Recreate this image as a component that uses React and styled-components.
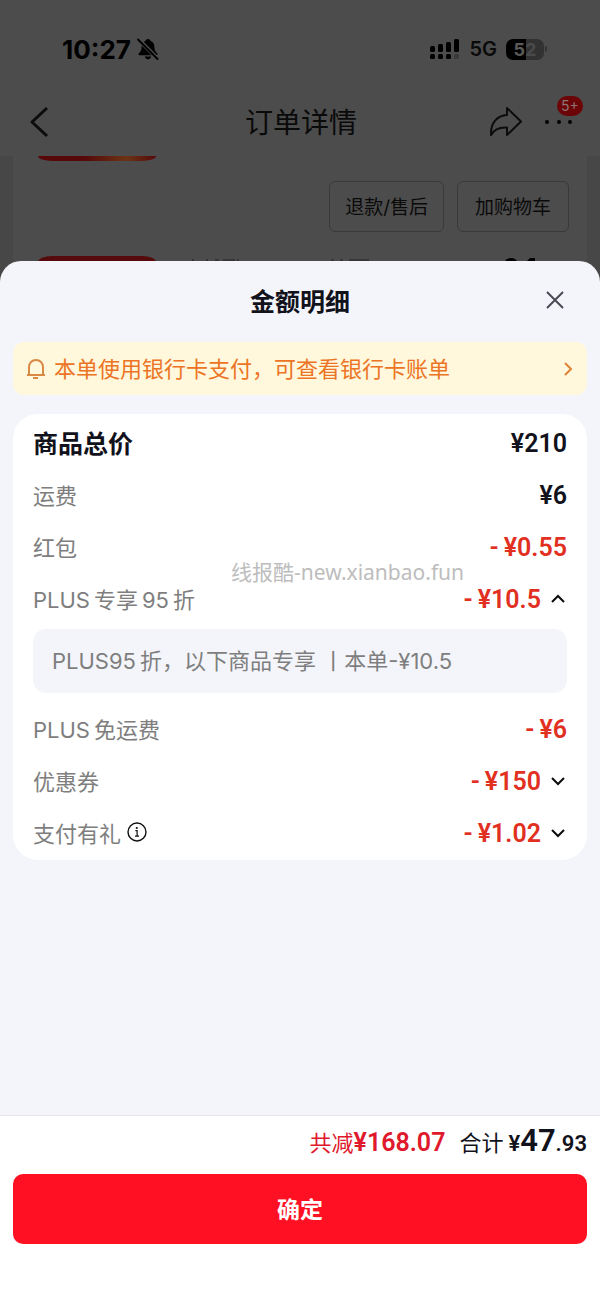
import React from "react";
import styled, { createGlobalStyle } from "styled-components";

const GlobalStyle = createGlobalStyle`
  * {
    box-sizing: border-box;
  }
  body {
    margin: 0;
    background: #4c4c4c;
    font-family: Inter, "Noto Sans CJK SC", sans-serif;
    color: #12121c;
  }
  button {
    border: 0;
    padding: 0;
    background: none;
    font: inherit;
    color: inherit;
    cursor: pointer;
  }
`;

const rows = [
  { label: "商品总价", value: "¥210", strong: true },
  { label: "运费", value: "¥6" },
  { label: "红包", value: "¥0.55", minus: true },
  {
    label: "PLUS\u2009专享\u200995\u2009折",
    value: "¥10.5",
    minus: true,
    toggle: "up",
    note: "PLUS95\u2009折，以下商品专享 丨本单-¥10.5"
  },
  { label: "PLUS\u2009免运费", value: "¥6", minus: true },
  { label: "优惠券", value: "¥150", minus: true, toggle: "down" },
  { label: "支付有礼", value: "¥1.02", minus: true, toggle: "down", info: true }
];

const BellOff = () => (
  <svg width="22" height="22" viewBox="0 0 22 22">
    <path
      d="M11 1C9.700 1 8.900 1.800 8.700 2.800 5.900 3.700 4.700 6 4.600 9 4.500 12.500 3.500 13.700 1.800 15.300 1.200 16 1.500 17.300 2.700 17.300H19.300C20.500 17.300 20.800 16 20.200 15.300 18.500 13.700 17.500 12.500 17.400 9 17.300 6 16.100 3.700 13.300 2.800 13.100 1.800 12.300 1 11 1ZM7.800 18.600C8.200 20.400 9.400 21.400 11 21.400S13.800 20.400 14.200 18.600Z"
      fill="#000"
    />
    <path d="M1.500 1.500 21 21" stroke="#4c4c4c" strokeWidth="4" />
    <path
      d="M1 1.500 20.500 21"
      stroke="#000"
      strokeWidth="1.800"
      strokeLinecap="round"
    />
  </svg>
);

const Signal = () => (
  <svg width="30" height="21" viewBox="0 0 30 21">
    <rect x="0" y="7" width="5" height="6" rx="1.500" />
    <rect x="8" y="5" width="5" height="8" rx="1.500" />
    <rect x="16" y="3" width="5" height="10" rx="1.500" />
    <rect x="24" y="0" width="5" height="13" rx="1.500" />
    <rect x="0" y="15" width="5" height="5" rx="1.500" />
    <rect x="8" y="15" width="5" height="5" rx="1.500" />
    <rect x="16" y="15" width="5" height="5" rx="1.500" />
    <rect x="24" y="15" width="5" height="5" rx="1.500" fill="#3a3a3a" />
  </svg>
);

const Stroke = ({ w, h, d, color = "#0c0c0c", width = 2, join = "miter" }) => (
  <svg width={w} height={h} viewBox={`0 0 ${w} ${h}`} aria-hidden="true">
    <path
      d={d}
      fill="none"
      stroke={color}
      strokeWidth={width}
      strokeLinejoin={join}
    />
  </svg>
);

const InfoIcon = () => (
  <svg width="20" height="20" viewBox="0 0 20 20" aria-hidden="true">
    <circle cx="10" cy="10" r="9" fill="none" stroke="#111" strokeWidth="1.400" />
    <circle cx="9.800" cy="6" r="1.100" fill="#111" />
    <path
      d="M8.400 8.700H10.100V14M8 14.200H12"
      fill="none"
      stroke="#111"
      strokeWidth="1.200"
    />
  </svg>
);

// tops of the next product's title and price, the sheet covers the rest
const NextItem = () => (
  <svg width="350" height="6" viewBox="0 0 350 6" aria-hidden="true">
    <path
      d="M3 4H5M17 4H19M26 4H30M34 4H46M48 4H50M142 4H145M151 4H154M160 4H180"
      stroke="#202020"
      strokeWidth="1"
    />
    <ellipse cx="322" cy="6" rx="6" ry="4" />
    <path d="M337 6 341 2H346V6Z" />
  </svg>
);

const Row = ({ label, value, strong, minus, toggle, info }) => (
  <Line>
    <Label $strong={strong}>
      {label}
      {info && (
        <button aria-label="说明">
          <InfoIcon />
        </button>
      )}
    </Label>
    <Amount $minus={minus}>
      {minus && <Minus>-</Minus>}
      {value}
      {toggle && (
        <Toggle aria-label={label} aria-expanded={toggle === "up"}>
          <Stroke
            w={14}
            h={10}
            d={toggle === "up" ? "M1 8 7 2 13 8" : "M1 2 7 8 13 2"}
          />
        </Toggle>
      )}
    </Amount>
  </Line>
);

export default function App() {
  return (
    <Screen>
      <GlobalStyle />
      <OrderPage>
        <StatusBar>
          <Clock>
            10:27
            <BellOff />
          </Clock>
          <Status>
            <Signal />
            <Network>5G</Network>
            <Battery>
              <Charge>
                5<Drained>2</Drained>
              </Charge>
              <Tip />
            </Battery>
          </Status>
        </StatusBar>
        <NavBar>
          <button aria-label="返回">
            <Stroke w={20} h={32} d="M18 2 3 16 18 30" width={3} join="round" />
          </button>
          <PageTitle>订单详情</PageTitle>
          <NavActions>
            <button aria-label="分享">
              <Stroke
                w={34}
                h={32}
                d="M18 2 32 15.500 18 29V21.500C10 21 5 23.500 2 29 1.500 17 8 9.500 18 9Z"
                join="round"
              />
            </button>
            <More aria-label="更多">
              <svg width="28" height="6" viewBox="0 0 28 6">
                <circle cx="2" cy="3" r="2" />
                <circle cx="14" cy="3" r="2" />
                <circle cx="25" cy="3" r="2" />
              </svg>
              <Badge>5+</Badge>
            </More>
          </NavActions>
        </NavBar>
        <Goods>
          <ThumbEnd />
          <GoodsActions>
            <Outline>退款/售后</Outline>
            <Outline $wide>加购物车</Outline>
          </GoodsActions>
          <NextGoods>
            <ThumbStart />
            <NextItem />
          </NextGoods>
        </Goods>
      </OrderPage>

      <Sheet>
        <SheetHeader>
          <SheetTitle>金额明细</SheetTitle>
          <Close aria-label="关闭">
            <Stroke w={18} h={18} d="M1 1 17 17M17 1 1 17" color="#4a4a52" />
          </Close>
        </SheetHeader>
        <Notice href="#bill">
          <Stroke
            w={18}
            h={20}
            d="M0 16H18M2 16V8C2 4 5 1 9 1S16 4 16 8V16M6 19H11"
            color="#d98a45"
          />
          <NoticeText>本单使用银行卡支付，可查看银行卡账单</NoticeText>
          <Stroke w={8} h={14} d="M1 1 7 7 1 13" color="#e08335" />
        </Notice>
        <Card>
          {rows.map(row => (
            <React.Fragment key={row.label}>
              <Row {...row} />
              {row.note && <Note>{row.note}</Note>}
            </React.Fragment>
          ))}
          <Watermark>线报酷-new.xianbao.fun</Watermark>
        </Card>
        <Footer>
          <Totals>
            <Saved>
              共减<Digits>¥168.07</Digits>
            </Saved>
            <span>合计</span>
            <Total>
              ¥<Big>47</Big>.93
            </Total>
          </Totals>
          <Confirm>确定</Confirm>
        </Footer>
      </Sheet>
    </Screen>
  );
}

const Screen = styled.div`
  display: flex;
  flex-direction: column;
  min-height: 100vh;

  svg {
    display: block;
    flex: none;
  }
`;

const OrderPage = styled.div`
  color: #0a0a0a;
`;

const StatusBar = styled.div`
  display: flex;
  align-items: center;
  justify-content: space-between;
  height: 88px;
  padding: 10px 53px 0 62px;
`;

const Clock = styled.div`
  display: flex;
  align-items: center;
  gap: 6px;
  font-size: 26px;
  font-weight: 700;
  color: #000;
`;

const Status = styled.div`
  display: flex;
  align-items: center;
`;

const Network = styled.span`
  margin: 0 9px;
  font-size: 20px;
  font-weight: 600;
`;

const Battery = styled.div`
  display: flex;
  align-items: center;
  gap: 1px;
`;

const Charge = styled.span`
  width: 38px;
  border-radius: 7px;
  background: linear-gradient(90deg, #000 52%, #323232 52%);
  color: #5a5a5a;
  font-size: 18px;
  line-height: 21px;
  font-weight: 700;
  text-align: center;
`;

const Drained = styled.span`
  color: #4a4a4a;
`;

const Tip = styled.span`
  width: 2px;
  height: 6px;
  border-radius: 0 2px 2px 0;
  background: #333;
`;

const NavBar = styled.header`
  display: grid;
  grid-template-columns: 1fr auto 1fr;
  align-items: center;
  height: 68px;
  padding: 0 27px 0 29px;
`;

const PageTitle = styled.h1`
  margin: 0;
  padding-bottom: 3px;
  font-size: 28px;
  font-weight: 400;
`;

const NavActions = styled.div`
  display: flex;
  align-items: center;
  justify-content: flex-end;
  gap: 22px;
`;

const More = styled.button`
  position: relative;
`;

const Badge = styled.span`
  position: absolute;
  left: 12px;
  bottom: 9px;
  width: 26px;
  border-radius: 10px;
  background: #6c0508;
  color: #8f7474;
  font-size: 14px;
  line-height: 20px;
`;

const Goods = styled.section`
  margin: 0 13px;
  padding: 0 18px 0 25px;
  box-shadow: 0 0 0 13px #474747;
  clip-path: inset(0 -13px);
`;

const ThumbEnd = styled.div`
  width: 118px;
  height: 5px;
  border-radius: 0 0 14px 14px / 0 0 5px 5px;
  background: linear-gradient(90deg, #57090a 40%, #6b3414 75%, #57090a);
`;

const NextGoods = styled.div`
  display: flex;
  gap: 33px;
`;

const ThumbStart = styled.div`
  flex: none;
  width: 118px;
  height: 24px;
  border-radius: 14px 14px 0 0 / 6px 6px 0 0;
  background: #570a0c;
`;

const GoodsActions = styled.div`
  display: flex;
  justify-content: flex-end;
  gap: 13px;
  padding: 20px 0 24px;
`;

const Outline = styled.button`
  && {
    height: 51px;
    padding: 0 ${props => (props.$wide ? 17 : 15)}px 2px;
    border: 1px solid #393939;
    border-radius: 6px;
    font-size: 19px;
  }
`;

const Sheet = styled.main`
  position: relative;
  display: flex;
  flex: 1;
  flex-direction: column;
  margin-top: -19px;
  border-radius: 21px 21px 0 0;
  background: #f4f5fa;
`;

const SheetHeader = styled.header`
  display: grid;
  grid-template-columns: 1fr auto 1fr;
  align-items: center;
  height: 81px;
  padding: 0 36px 4px;
`;

const SheetTitle = styled.h2`
  grid-column: 2;
  margin: 0;
  font-size: 25px;
  font-weight: 700;
`;

const Close = styled.button`
  justify-self: end;
`;

const Notice = styled.a`
  display: flex;
  align-items: center;
  gap: 9px;
  height: 53px;
  margin: 0 13px 19px;
  padding: 0 15px 0 14px;
  border-radius: 11px;
  background: #fff8dc;
  color: #ec7424;
  font-size: 22px;
  text-decoration: none;
`;

const NoticeText = styled.span`
  flex: 1;
  padding-bottom: 4px;
`;

const Card = styled.section`
  position: relative;
  margin: 0 13px 20px;
  padding: 3px 20px 1px;
  border-radius: 25px;
  background: #fff;
`;

const Line = styled.div`
  display: flex;
  align-items: center;
  justify-content: space-between;
  height: 52px;
`;

const Label = styled.span`
  display: flex;
  align-items: center;
  gap: 6px;
  padding-bottom: 3px;
  color: ${props => (props.$strong ? "#12121c" : "#7e7e7e")};
  font-size: ${props => (props.$strong ? 25 : 22)}px;
  font-weight: ${props => (props.$strong ? 700 : 400)};
`;

const Amount = styled.span`
  display: flex;
  align-items: center;
  color: ${props => (props.$minus ? "#e1301f" : "#12121c")};
  font-family: Roboto, sans-serif;
  font-size: 25px;
  font-weight: 600;
`;

const Minus = styled.span`
  margin-right: 5px;
`;

const Toggle = styled.button`
  margin: 0 2px 0 10px;
`;

const Note = styled.p`
  margin: 4px 0 10px;
  padding: 0 19px;
  border-radius: 13px;
  background: #f4f5fa;
  color: #7e7e7e;
  font-size: 22px;
  line-height: 64px;
`;

const Watermark = styled.span`
  position: absolute;
  top: 143px;
  left: 38%;
  color: #bdbdbd;
  font-family: "Noto Sans", "Noto Sans CJK SC", sans-serif;
  font-size: 21px;
  line-height: 30px;
`;

const Footer = styled.footer`
  margin-top: auto;
  padding: 0 13px 60px;
  border-top: 1px solid #e6e6ea;
  background: #fff;
`;

const Totals = styled.div`
  display: flex;
  align-items: baseline;
  justify-content: flex-end;
  height: 58px;
  font-size: 22px;
  line-height: 50px;
`;

const Saved = styled.span`
  margin-right: 14px;
  color: #e0182c;
`;

const Digits = styled.span`
  font-family: Roboto, sans-serif;
  font-size: 25px;
  font-weight: 600;
`;

const Total = styled.span`
  margin-left: 5px;
  font-family: Roboto, sans-serif;
  font-weight: 600;
`;

const Big = styled.span`
  font-size: 31px;
`;

const Confirm = styled.button`
  && {
    display: block;
    width: 100%;
    height: 70px;
    padding-bottom: 2px;
    border-radius: 10px;
    background: #ff1022;
    color: #fff;
    font-size: 23px;
    font-weight: 700;
  }
`;
